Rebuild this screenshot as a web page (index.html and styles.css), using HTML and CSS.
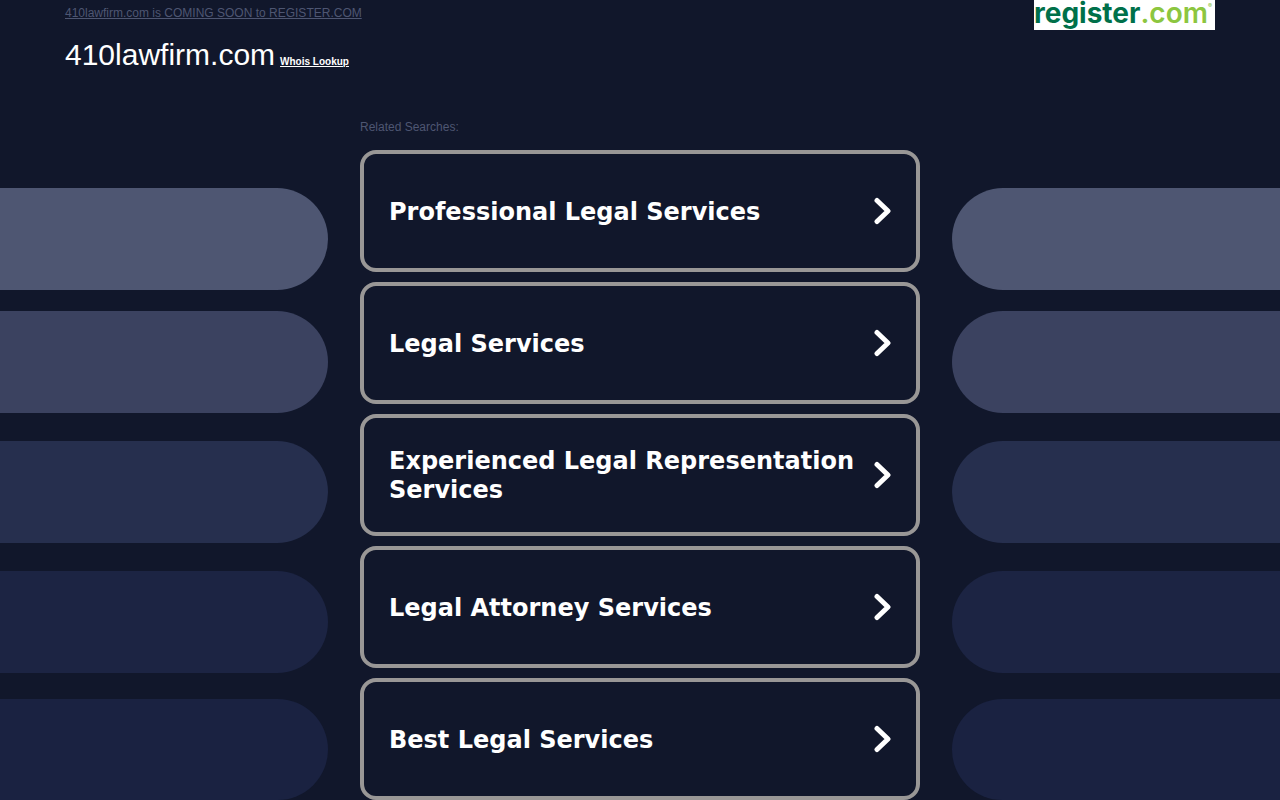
FILE: index.html
```html
<!DOCTYPE html>
<html lang="en">
	<head>
		<meta charset="UTF-8">
		<title>410lawfirm.com</title>
		<link rel="stylesheet" href="styles.css">
	</head>
	<body>
		<div class="header">
			<div class="headerLeft">
				<a class="comingSoon" href="#">410lawfirm.com is COMING SOON to REGISTER.COM</a>
				<div class="domain">
					<h1>410lawfirm.com</h1>
					<a class="whois" href="#">Whois Lookup</a>
				</div>
			</div>
			<a class="logo" href="#">register<span class="com">.com</span><span class="reg">®</span></a>
		</div>
		<div class="main">
			<div class="side left">
				<div class="pill p1"></div>
				<div class="pill p2"></div>
				<div class="pill p3"></div>
				<div class="pill p4"></div>
				<div class="pill p5"></div>
			</div>
			<div class="content">
				<p class="related">Related Searches:</p>
				<ul class="searches">
					<li><a href="#"><span>Professional Legal Services</span><svg width="18" height="28" viewBox="0 0 18 28"><path d="M3 3.500L14 14L3 24.500"/></svg></a></li>
					<li><a href="#"><span>Legal Services</span><svg width="18" height="28" viewBox="0 0 18 28"><path d="M3 3.500L14 14L3 24.500"/></svg></a></li>
					<li><a href="#"><span>Experienced Legal Representation Services</span><svg width="18" height="28" viewBox="0 0 18 28"><path d="M3 3.500L14 14L3 24.500"/></svg></a></li>
					<li><a href="#"><span>Legal Attorney Services</span><svg width="18" height="28" viewBox="0 0 18 28"><path d="M3 3.500L14 14L3 24.500"/></svg></a></li>
					<li><a href="#"><span>Best Legal Services</span><svg width="18" height="28" viewBox="0 0 18 28"><path d="M3 3.500L14 14L3 24.500"/></svg></a></li>
				</ul>
			</div>
			<div class="side right">
				<div class="pill p1"></div>
				<div class="pill p2"></div>
				<div class="pill p3"></div>
				<div class="pill p4"></div>
				<div class="pill p5"></div>
			</div>
		</div>
	</body>
</html>
```
FILE: styles.css
```css
body{
	margin: 0;
	background-color: #11172b;
	font-family: "Liberation Sans", Arial, sans-serif;
	font-size: 12px;
	color: #4e5672;
}
.header{
	display: flex;
	justify-content: space-between;
	align-items: flex-start;
	height: 120px;
	margin: 0 65px;
}
.headerLeft{
	padding-top: 6px;
}
.comingSoon{
	display: block;
	line-height: 14px;
	color: #4e5672;
}
.domain{
	display: flex;
	align-items: baseline;
	gap: 5px;
	padding-top: 18px;
}
.domain h1{
	margin: 0;
	font-size: 30px;
	font-weight: normal;
	line-height: 34px;
	color: white;
}
.whois{
	font-size: 10px;
	font-weight: bold;
	color: white;
}
/* logo */
.logo{
	display: flex;
	box-sizing: border-box;
	width: 181px;
	height: 30px;
	background-color: white;
	font-family: Inter, sans-serif;
	font-size: 28px;
	font-weight: 700;
	line-height: 27px;
	color: #00704a;
	text-decoration: none;
}
.com{
	font-weight: 600;
	color: #8cc63f;
}
.reg{
	font-size: 6px;
	line-height: 12px;
	color: #8cc63f;
}
.main{
	display: grid;
	grid-template-columns: 1fr 560px 1fr;
	column-gap: 32px;
}
/* stripes on both sides */
.side{
	padding-top: 68px;
}
.pill{
	height: 102px;
	margin-bottom: 28px;
}
.left .pill{
	border-radius: 0 51px 51px 0;
}
.right .pill{
	border-radius: 51px 0 0 51px;
}
.side .p1{
	margin-bottom: 21px;
	background-color: #4e5672;
}
.p2{
	background-color: #3b4260;
}
.p3{
	background-color: #262f4e;
}
.side .p4{
	margin-bottom: 26px;
	background-color: #1c2443;
}
.side .p5{
	height: 101px;
	margin-bottom: 0;
	background-color: #1a2241;
}
.related{
	margin: 0 0 16px;
	line-height: 14px;
}
.searches{
	display: flex;
	flex-direction: column;
	gap: 10px;
	margin: 0;
	padding: 0;
	list-style: none;
}
.searches a{
	display: flex;
	align-items: center;
	justify-content: space-between;
	box-sizing: border-box;
	min-height: 122px;
	padding: 0 24px 0 25px;
	border: 4px solid #999796;
	border-radius: 16px;
	font-family: Verdana, "DejaVu Sans", sans-serif;
	font-size: 24px;
	font-weight: bold;
	line-height: 29px;
	color: white;
	text-decoration: none;
}
.searches span{
	padding-top: 2px;
}
.searches svg{
	flex: none;
	fill: none;
	stroke: white;
	stroke-width: 5;
	stroke-linecap: round;
	stroke-linejoin: round;
}
```
